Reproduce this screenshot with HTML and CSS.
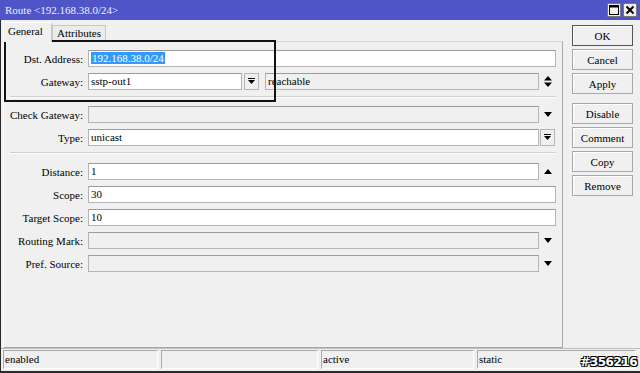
FILE: index.html
```html
<!DOCTYPE html>
<html lang="en">
<head>
    <meta charset="UTF-8">
    <title>Route &lt;192.168.38.0/24&gt;</title>
    <link rel="stylesheet" href="styles.css">
</head>
<body>
    <div class="window">
        <div class="titlebar">
            <span class="title">Route &lt;192.168.38.0/24&gt;</span>
            <div class="win-btns">
                <span class="win-btn">
                    <svg width="10" height="10" viewBox="0 0 10 10"><rect x="0.5" y="0.5" width="9" height="9" fill="none" stroke="#000"/><line x1="0" y1="1.5" x2="10" y2="1.5" stroke="#000" stroke-width="2"/></svg>
                </span>
                <span class="win-btn">
                    <svg width="10" height="10" viewBox="0 0 10 10"><path d="M1.5 1.5 L8.5 8.5 M8.5 1.5 L1.5 8.5" stroke="#000" stroke-width="2"/></svg>
                </span>
            </div>
        </div>

        <div class="main">
            <div class="tabs-area">
                <div class="tabs">
                    <div class="tab active">General</div>
                    <div class="tab">Attributes</div>
                </div>
                <div class="panel">
                    <div class="row">
                        <label class="label">Dst. Address:</label>
                        <div class="field"><span class="selected">192.168.38.0/24</span></div>
                    </div>
                    <div class="row">
                        <label class="label">Gateway:</label>
                        <div class="field gw">sstp-out1</div>
                        <span class="drop-btn">
                            <svg width="7" height="7" viewBox="0 0 7 7"><rect x="0" y="0" width="7" height="1" fill="#000"/><path d="M0 2 L7 2 L3.5 6 Z" fill="#000"/></svg>
                        </span>
                        <div class="field disabled reach">reachable</div>
                        <span class="trail">
                            <svg width="8" height="11" viewBox="0 0 8 11"><path d="M0 4.5 L8 4.5 L4 0 Z M0 6.5 L8 6.5 L4 11 Z" fill="#000"/></svg>
                        </span>
                    </div>

                    <div class="separator"></div>

                    <div class="row">
                        <label class="label">Check Gateway:</label>
                        <div class="field disabled"></div>
                        <span class="trail">
                            <svg width="8" height="5" viewBox="0 0 8 5"><path d="M0 0 L8 0 L4 5 Z" fill="#000"/></svg>
                        </span>
                    </div>
                    <div class="row">
                        <label class="label">Type:</label>
                        <div class="field">unicast</div>
                        <span class="trail boxed">
                            <svg width="7" height="7" viewBox="0 0 7 7"><rect x="0" y="0" width="7" height="1" fill="#000"/><path d="M0 2 L7 2 L3.5 6 Z" fill="#000"/></svg>
                        </span>
                    </div>

                    <div class="separator"></div>

                    <div class="row">
                        <label class="label">Distance:</label>
                        <div class="field">1</div>
                        <span class="trail">
                            <svg width="8" height="5" viewBox="0 0 8 5"><path d="M0 5 L8 5 L4 0 Z" fill="#000"/></svg>
                        </span>
                    </div>
                    <div class="row">
                        <label class="label">Scope:</label>
                        <div class="field">30</div>
                    </div>
                    <div class="row">
                        <label class="label">Target Scope:</label>
                        <div class="field">10</div>
                    </div>
                    <div class="row">
                        <label class="label">Routing Mark:</label>
                        <div class="field disabled"></div>
                        <span class="trail">
                            <svg width="8" height="5" viewBox="0 0 8 5"><path d="M0 0 L8 0 L4 5 Z" fill="#000"/></svg>
                        </span>
                    </div>
                    <div class="row">
                        <label class="label">Pref. Source:</label>
                        <div class="field disabled"></div>
                        <span class="trail">
                            <svg width="8" height="5" viewBox="0 0 8 5"><path d="M0 0 L8 0 L4 5 Z" fill="#000"/></svg>
                        </span>
                    </div>
                </div>
            </div>

            <div class="actions">
                <button class="btn default">OK</button>
                <button class="btn">Cancel</button>
                <button class="btn">Apply</button>
                <button class="btn group">Disable</button>
                <button class="btn">Comment</button>
                <button class="btn">Copy</button>
                <button class="btn">Remove</button>
            </div>
        </div>

        <div class="statusbar">
            <div class="seg s1">enabled</div>
            <div class="seg s2"></div>
            <div class="seg s3">active</div>
            <div class="seg s4">static</div>
        </div>

        <div class="highlight-box"></div>
        <div class="badge">#356216</div>
    </div>
</body>
</html>
```

FILE: styles.css
```css
body {
    margin: 0;
    font-family: "Liberation Serif", "Times New Roman", serif;
    font-size: 11px;
    color: #000;
    background-color: #f0f0f0;
}

.window {
    position: relative;
    width: 639px;
    height: 371px;
    background-color: #f0f0f0;
    border-left: 1px solid #2a2a2a;
    border-bottom: 2px solid #2a2a2a;
    display: flex;
    flex-direction: column;
}

.titlebar {
    height: 20px;
    margin-left: -1px;
    background-color: #4f54c6;
    display: flex;
    align-items: center;
    justify-content: space-between;
    padding: 0 3px 0 5px;
}

.title {
    color: #eef0ff;
    font-size: 11px;
}

.win-btns {
    display: flex;
    gap: 2px;
}

.win-btn {
    width: 14px;
    height: 14px;
    background-color: #f0f0f0;
    border: 1px solid #777;
    display: flex;
    align-items: center;
    justify-content: center;
    box-sizing: border-box;
}

.main {
    flex: 1;
    display: flex;
}

.tabs-area {
    width: 560px;
    margin-left: 2px;
    display: flex;
    flex-direction: column;
}

.tabs {
    height: 21px;
    display: flex;
    align-items: flex-end;
}

.tab {
    height: 15px;
    padding: 0 4px;
    border: 1px solid #c8c8c8;
    border-bottom: none;
    line-height: 15px;
    background-color: #ececec;
}

.tab.active {
    height: 19px;
    width: 39px;
    background-color: #f0f0f0;
    border-top-color: #ffffff;
    border-left-color: #ffffff;
    position: relative;
    z-index: 1;
    margin-bottom: -1px;
    line-height: 17px;
}

.panel {
    flex: 1;
    border: 1px solid #a8a8a8;
    border-top-color: #d8d8d8;
    border-left-color: #ffffff;
    padding: 8px 6px 0 0;
}

.row {
    display: flex;
    align-items: center;
    height: 17px;
    margin-bottom: 6px;
}

.separator + .row + .row + .separator + .row ~ .row {
    margin-top: 0.4px;
}

.label {
    width: 79px;
    margin-right: 5px;
    text-align: right;
    white-space: nowrap;
}

.field {
    flex: 1;
    height: 17px;
    box-sizing: border-box;
    background-color: #ffffff;
    border: 1px solid #b4b4b4;
    border-top-color: #9c9c9c;
    padding-left: 2px;
    line-height: 15px;
    white-space: nowrap;
    overflow: hidden;
}

.field.disabled {
    background-color: #f0f0f0;
}

.field.gw {
    flex: none;
    width: 154px;
}

.field.reach {
    margin-left: 6px;
}

.selected {
    background-color: #3399ff;
    color: #ffffff;
    padding: 0 1px;
}

.drop-btn {
    width: 15px;
    height: 17px;
    margin-left: 2px;
    box-sizing: border-box;
    border: 1px solid #b4b4b4;
    display: flex;
    align-items: center;
    justify-content: center;
}

.trail {
    width: 16px;
    height: 17px;
    margin-left: 1px;
    display: flex;
    align-items: center;
    justify-content: center;
}

.trail.boxed {
    box-sizing: border-box;
    border: 1px solid #b4b4b4;
    width: 15px;
    margin-right: 1px;
}

.separator {
    height: 0;
    margin: 2px 0 8px 6px;
    border-top: 1px solid #d0d0d0;
    border-bottom: 1px solid #ffffff;
}

.separator + .row + .row + .separator {
    margin-bottom: 9px;
}

.actions {
    width: 61px;
    margin-left: 9px;
    padding-top: 5px;
    display: flex;
    flex-direction: column;
}

.btn {
    height: 21px;
    margin-bottom: 3px;
    padding: 0;
    font-family: "Liberation Serif", "Times New Roman", serif;
    font-size: 11px;
    color: #000;
    background-color: #f0f0f0;
    border: 1px solid #a8a8a8;
    box-shadow: inset 1px 1px 0 #ffffff;
}

.btn.default {
    border-color: #555;
}

.btn.group {
    margin-top: 6px;
}

.statusbar {
    height: 23px;
    border-top: 1px solid #bdbdbd;
    display: flex;
    gap: 3px;
    padding: 1px 0 0 2px;
    box-sizing: border-box;
}

.seg {
    height: 19px;
    box-sizing: border-box;
    border: 1px solid #ffffff;
    border-top-color: #a8a8a8;
    border-left-color: #a8a8a8;
    padding-left: 1px;
    line-height: 16px;
}

.s1 { width: 155px; }
.s2 { width: 157px; }
.s3 { width: 153px; }
.s4 { width: 159px; }

.highlight-box {
    position: absolute;
    left: 3px;
    top: 40px;
    width: 268px;
    height: 58px;
    border: 2px solid #111;
}

.badge {
    position: absolute;
    right: 3px;
    bottom: 2px;
    font-family: "DejaVu Sans", sans-serif;
    font-weight: bold;
    font-size: 12px;
    color: #ffffff;
    letter-spacing: -0.5px;
    text-shadow: -1px -1px 0 #000, 1px -1px 0 #000, -1px 1px 0 #000, 1px 1px 0 #000;
}
```
